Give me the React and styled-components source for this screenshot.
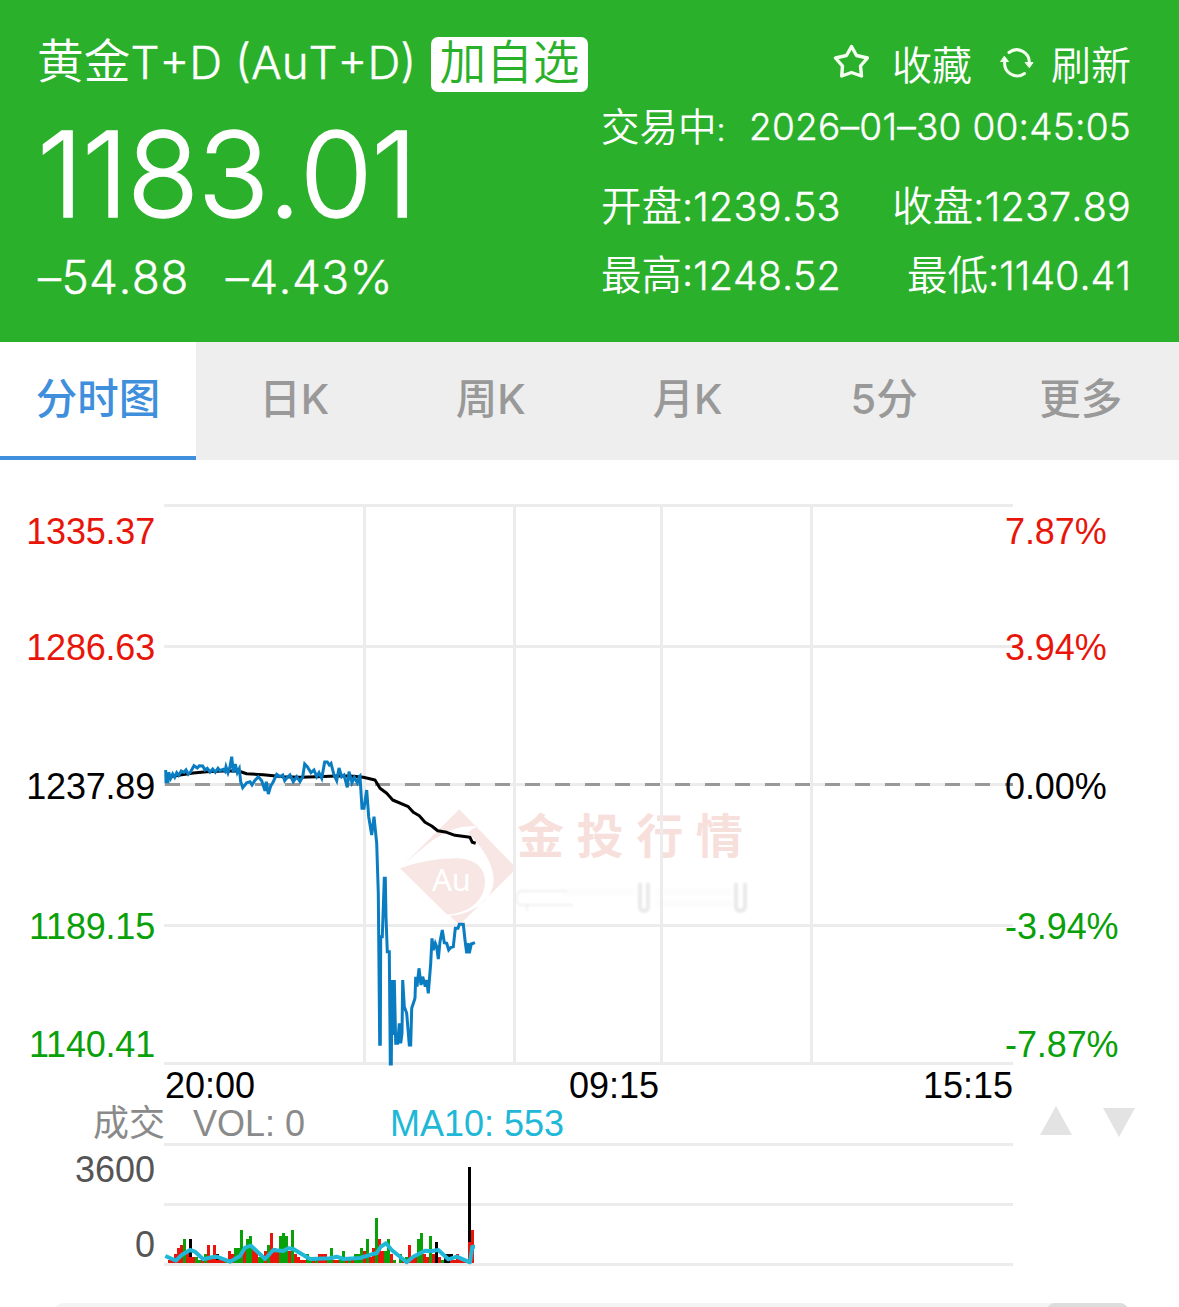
import React from 'react'
import styled, { createGlobalStyle } from 'styled-components';

const GlobalStyle = createGlobalStyle`
   * {
      box-sizing: border-box;
   }
   body {
      margin: 0;
      background: #fff;
      font-family: Inter, "Noto Sans CJK SC", sans-serif;
   }
`;
const Page = styled.div`
   width: 1179px;
   height: 1307px;
   overflow: hidden;
   background: #fff;
`;

/* header */
const Header = styled.header`
   display: flex;
   justify-content: space-between;
   height: 342px;
   padding: 37px 48px 0 37px;
   background: #2bb02b;
   color: #fff;
   font-weight: 350;
   font-kerning: none;
   white-space: nowrap;
`;
const Summary = styled.div`
   display: flex;
   flex-direction: column;
`;
const TitleRow = styled.div`
   display: flex;
   height: 55px;
   font-size: 46.7px;
   line-height: 48px;
`;
const Latin = styled.span`
   font-size: ${p => p.$size}px;
   letter-spacing: ${p => p.$space || 0}px;
   vertical-align: ${p => p.$drop || 0}px;
   -webkit-text-stroke: 0.4px #fff;
`;
const AddButton = styled.button`
   width: 157px;
   height: 55px;
   padding: 0 0 5px;
   border: 0;
   border-radius: 7px;
   background: #fff;
   color: #2bb02b;
   font: inherit;
   line-height: 48px;
`;
const TitleText = styled.div`
   width: 394px;
`;
const Price = styled.div`
   height: 165px;
   font-size: 118px;
   font-weight: 300;
   line-height: 165px;
   letter-spacing: -1.4px;
   -webkit-text-stroke: 1.4px #fff;
`;
const Change = styled.div`
   display: flex;
   gap: 37px;
   padding-left: 1px;
   font-size: 46px;
   line-height: 41px;
   letter-spacing: 0.4px;
   -webkit-text-stroke: 0.4px #fff;
`;
const Details = styled.div`
   display: flex;
   flex-direction: column;
   width: 530px;
`;
const Actions = styled.div`
   display: flex;
   justify-content: flex-end;
   align-items: center;
   height: 51px;
   margin-bottom: 4px;
   font-size: 40px;
`;
const Action = styled.div`
   display: flex;
   align-items: center;
   gap: ${p => p.$gap}px;
   margin-left: 27px;
   svg {
      display: block;
      margin-bottom: 2px;
   }
`;
const DetailRow = styled.div`
   display: flex;
   justify-content: space-between;
   height: ${p => p.$height}px;
   font-size: ${p => p.$size}px;
   line-height: ${p => p.$height}px;
`;

/* tabs */
const Tabs = styled.nav`
   display: grid;
   grid-template-columns: 196px repeat(5, 1fr);
   height: 118px;
   background: #eee;
`;
const Tab = styled.a`
   border-bottom: 4px solid ${p => (p.$active ? '#3f8fdc' : 'transparent')};
   background: ${p => (p.$active ? '#fff' : 'transparent')};
   color: ${p => (p.$active ? '#3f8fdc' : '#999')};
   font-size: 41.5px;
   font-weight: 500;
   line-height: 114px;
   text-align: center;
`;

/* charts */
const Charts = styled.main`
   padding-top: 44px;
   font-family: "Liberation Sans", "Noto Sans CJK SC", sans-serif;
   font-size: 36px;
   line-height: 36px;
`;
const PriceChart = styled.section`
   display: grid;
   grid-template-columns: 164px 841px 174px;
   height: 562px;
`;
const Scale = styled.div`
   display: grid;
   grid-template-rows: 116px 139px 140px 118px 36px;
   padding-top: 10px;
   padding-right: ${p => (p.$right ? 0 : 9)}px;
   letter-spacing: ${p => (p.$right ? -0.1 : -0.2)}px;
   text-align: ${p => (p.$right ? 'left' : 'right')};
   z-index: 1;
`;
const ScaleLabel = styled.span`
   color: ${p => p.$color};
`;
const Plot = styled.svg`
   display: block;
   overflow: visible;
`;
const Times = styled.div`
   display: grid;
   grid-template-columns: 404px 1fr auto;
   width: 848px;
   height: 38px;
   margin-left: 165px;
   padding-top: 2px;
`;
const VolumeInfo = styled.div`
   display: flex;
   align-items: center;
   height: 39px;
   padding: 0 44px 0 93px;
   color: #8a8a8a;
   white-space: nowrap;
`;
const Info = styled.span`
   width: ${p => p.$width}px;
   color: ${p => p.$color};
`;
const Arrows = styled.svg`
   margin: 0 0 5px auto;
`;
const VolumeChart = styled.section`
   display: grid;
   grid-template-columns: 164px 849px;
   height: 160px;
`;
const VolumeScale = styled.div`
   display: flex;
   flex-direction: column;
   gap: 39px;
   padding: 9px 9px 0 0;
   color: #555;
   text-align: right;
`;
const SearchBar = styled.div`
   display: flex;
   justify-content: flex-end;
   width: 1073px;
   height: 40px;
   margin-left: 55px;
   border-radius: 8px;
   background: #f4f4f4;
   overflow: hidden;
`;
const SearchButton = styled.div`
   width: 81px;
   border-radius: 8px 0 0 0;
   background: #ddd;
`;

const RED = '#e8160a';
const GREEN = '#09a009';

const scale = [
   { price: '1335.37', percent: '7.87%', color: RED },
   { price: '1286.63', percent: '3.94%', color: RED },
   { price: '1237.89', percent: '0.00%', color: '#000' },
   { price: '1189.15', percent: '-3.94%', color: GREEN },
   { price: '1140.41', percent: '-7.87%', color: GREEN },
];

const tabs = ['分时图', '日K', '周K', '月K', '5分', '更多'];

// one third of a pixel per unit, measured from the left end of each session
const early = [
   [47, 90], [48, 125], [54, 125], [56, 97], [62, 115], [68, 102], [74, 112], [80, 98], [86, 106], [94, 93],
   [102, 97], [108, 90], [115, 103], [122, 95], [132, 77], [142, 84], [148, 77], [158, 78], [165, 90], [172, 85],
   [180, 96], [188, 87], [196, 97], [204, 85], [210, 92], [220, 88], [225, 94], [228, 80], [234, 98], [240, 80],
   [245, 50], [250, 98], [256, 72], [262, 98], [268, 86], [272, 125], [278, 143], [290, 128], [300, 125], [306, 135],
   [314, 122], [325, 110], [335, 122], [345, 152], [349, 125], [355, 162], [362, 138], [370, 125], [380, 103], [390, 110],
   [398, 105], [404, 122], [412, 112], [420, 105], [430, 125], [440, 110], [450, 125], [458, 110], [464, 72], [472, 80],
   [483, 98], [492, 90], [500, 110], [507, 98], [515, 115], [524, 66], [532, 66], [538, 75], [543, 70], [552, 105],
   [560, 122], [567, 84], [575, 110], [582, 105], [592, 142], [597, 95], [606, 128], [613, 112], [622, 128], [628, 110],
];
const late = [
   [30, 48], [36, 145], [42, 145], [50, 90], [56, 170], [65, 225], [72, 170], [80, 250], [85, 400], [89, 853],
   [91, 853], [92, 530], [97, 530], [103, 355], [106, 355], [108, 470], [112, 575], [118, 575], [121, 912], [124, 912],
   [126, 660], [130, 825], [133, 660], [137, 850], [143, 850], [148, 790], [152, 850], [156, 820], [158, 660],
   [163, 740], [170, 760], [178, 855], [182, 855], [185, 745], [195, 715], [197, 650], [201, 680], [207, 625], [213, 675],
   [218, 650], [226, 680], [230, 660], [235, 700], [242, 610], [246, 535], [250, 570], [256, 550], [260, 560],
   [265, 597], [270, 545], [277, 510], [283, 548], [290, 550], [296, 570], [303, 562], [310, 560], [316, 505],
   [324, 505], [328, 493], [340, 493], [345, 540], [350, 580], [354, 550], [358, 580], [364, 552], [375, 548],
];
const averageEarly = [
   [50, 114], [60, 110], [90, 105], [130, 99], [170, 95], [220, 93], [265, 93], [290, 101], [340, 104], [400, 110],
   [450, 112], [500, 110], [560, 108], [600, 108],
];
const averageLate = [
   [0, 48], [40, 52], [75, 60], [90, 85], [110, 100], [128, 120], [175, 140], [190, 157], [208, 167], [225, 187],
   [245, 198], [263, 212], [290, 217], [315, 226], [360, 232], [367, 247], [377, 250],
];
const volumeEarly = [
   [46, 318], [78, 332], [95, 315], [120, 300], [135, 305], [160, 328], [185, 322], [200, 320], [240, 335],
   [270, 318], [285, 293], [303, 287], [345, 327], [370, 300], [400, 303], [415, 295], [430, 297], [480, 327],
];
const volumeLate = [
   [0, 327], [60, 325], [80, 320], [100, 327], [150, 324], [185, 313], [200, 310], [212, 290], [228, 280], [245, 300],
   [290, 337], [310, 320], [345, 302], [365, 303], [385, 300], [415, 328], [440, 320], [480, 337], [487, 290], [495, 290],
];

const bars = (
   'r1 r1 r3 r5 r6 g8 r4 k8:2 r2 g2 g1 r1 g3 r6 r2 r6 k3:1 r2 r1 g1 r4 r3 g5 g5 g11 r5 g8 g9 r5 r4 g2 g2 r4 g6 r10 r5 r4 ' +
   'g9 g10 g9 r4 g11 r3 r2 r1 r1 g3 g2 r2 g2 r3 r3 r3 g1 g5 r1 r1 g2 g4 r2 g2 r1 g3 g3 g5 r4 g8 r2 r5 g15 r8 r4 g4 g8 r3 ' +
   'g1 r0 g3 r1 g2 r6 r2 r2 g8 g10 r3 r2 g9 r3 k7 r2 g1 k3 k3 k3:1 r1 r3 r1 r1 r1 k32:7 r11'
).split(' ').map((bar) => {
   const [height, base = 0] = bar.slice(1).split(':').map(Number);
   return { color: bar[0], height, base };
});
const barColors = { r: RED, g: GREEN, k: '#000' };

const shift = (points, left, top) => points.map(([x, y]) => `${(left + x / 3).toFixed(1)},${(top + y / 3).toFixed(1)}`).join(' ');

const StarIcon = () => (
   <svg width="37" height="36" viewBox="0 0 37 36" fill="none" stroke="#f4fff0" strokeWidth="3.4" strokeLinejoin="round">
      <path d="M19.500 2.500l5 9 11 2.500-7 8 1 10-10-3.500-9.800 3.500.8-10L3.500 14l11-2.500z" />
   </svg>
);

const RefreshIcon = () => (
   <svg width="36" height="32" viewBox="0 0 36 32" fill="none" stroke="#f4fff0" strokeWidth="3" strokeLinecap="round">
      <path d="M10 6.500a12.500 12.500 0 0 1 20.200 11M25.500 27.500a12.500 12.500 0 0 1-19.700-12" />
      <path d="M26.500 16.500h7.500l-3.500 5zM2 15.500h7.500l-4-5z" fill="#f4fff0" strokeWidth="1" />
   </svg>
);

const Watermark = () => (
   <g>
      <g transform="translate(390 800) scale(.3333)" fill="#f7e6e4">
         <path d="M208 28L380 205 208 375 180 348C260 340 314 290 311 235C308 180 265 130 235 98Q243 86 264 80C180 68 110 130 33 202z" />
         <path d="M30 205Q110 176 195 175C255 174 285 205 285 245C284 300 240 338 172 344z" />
      </g>
      <text x="432" y="891" fill="#fff" fontFamily="Noto Sans, sans-serif" fontSize="31">Au</text>
      <text x="517" y="853" fill="#f7e0dc" fontFamily="Noto Sans CJK SC, sans-serif" fontSize="47" fontWeight="700" letterSpacing="12.6">金投行情</text>
      <g fill="none" stroke="#e9e9e9" strokeWidth="2" filter="url(#soften)">
         <path d="M567 891H523q-7 0-7 7t7 7h4v6M523 905h50" opacity=".7" />
         <path d="M640 883v22q0 6 4 6t4-6v-22M736 883v22q0 6 4.500 6t4.500-6v-22" strokeWidth="4" />
         <path d="M565 892h70M655 892h78M655 903h78" strokeWidth="8" opacity=".12" />
      </g>
   </g>
);

const PricePlot = () => (
   <Plot width="849" height="562" viewBox="164 504 849 562" fill="none">
      <defs>
         <filter id="soften">
            <feGaussianBlur stdDeviation="1.3" />
         </filter>
      </defs>
      <Watermark />
      <g stroke="#ececec" strokeWidth="3">
         {[505.5, 646.5, 784.5, 925.5, 1063.5].map((y) => <path key={y} d={`M164 ${y}H1013`} />)}
         {[364.5, 514.5, 661.5, 811.5].map((x) => <path key={x} d={`M${x} 505V1064`} />)}
      </g>
      <path d="M165 784.5H1013" stroke="#999" strokeWidth="3" strokeDasharray="15 15" />
      <polyline points={`${shift(averageEarly, 150, 740)} ${shift(averageLate, 350, 760)}`} stroke="#000" strokeWidth="3" strokeLinejoin="round" />
      <polyline points={`${shift(early, 150, 740)} ${shift(late, 350, 760)}`} stroke="#0a7cc1" strokeWidth="3" />
   </Plot>
);

const VolumePlot = () => (
   <Plot width="849" height="124" viewBox="164 1143 849 124" fill="none">
      <g stroke="#ececec" strokeWidth="3">
         <path d="M164 1144.500H1013M164 1204.500H1013M164 1264.500H1013" />
      </g>
      {bars.map(({ color, height, base }, i) => (
         <g key={i}>
            <rect x={168 + i * 3} y={1263 - height * 3} width="3" height={height * 3} fill={barColors[color]} />
            <rect x={168 + i * 3} y={1263 - base * 3} width="3" height={base * 3} fill={RED} />
         </g>
      ))}
      <polyline points={`${shift(volumeEarly, 150, 1150)} ${shift(volumeLate, 310, 1150)}`} stroke="#20b8d6" strokeWidth="4" strokeLinejoin="round" />
   </Plot>
);

const App = () => {
   return (
      <Page>
         <GlobalStyle />
         <Header>
            <Summary>
               <TitleRow>
                  <TitleText>黄金<Latin $size={45.7} $drop={-1}>T+D (AuT+D)</Latin></TitleText>
                  <AddButton>加自选</AddButton>
               </TitleRow>
               <Price>1183.01</Price>
               <Change>
                  <span>–54.88</span>
                  <span>–4.43%</span>
               </Change>
            </Summary>
            <Details>
               <Actions>
                  <Action $gap={23}><StarIcon /><span>收藏</span></Action>
                  <Action $gap={16}><RefreshIcon /><span>刷新</span></Action>
               </Actions>
               <DetailRow $height={70} $size={38.5}>
                  <span>交易中<Latin $size={32}>:</Latin></span>
                  <Latin $size={37} $space={0.25}>2026–01–30 00:45:05</Latin>
               </DetailRow>
               <DetailRow $height={90} $size={40.5}>
                  <span>开盘<Latin $size={39.5} $space={0.2}>:1239.53</Latin></span>
                  <span>收盘<Latin $size={39.5} $space={0.2}>:1237.89</Latin></span>
               </DetailRow>
               <DetailRow $height={48} $size={40.5}>
                  <span>最高<Latin $size={39.5}>:1248.52</Latin></span>
                  <span>最低<Latin $size={39.5}>:1140.41</Latin></span>
               </DetailRow>
            </Details>
         </Header>
         <Tabs>
            {tabs.map((tab, i) => <Tab key={tab} $active={i === 0}>{tab}</Tab>)}
         </Tabs>
         <Charts>
            <PriceChart>
               <Scale>
                  {scale.map((row) => <ScaleLabel key={row.price} $color={row.color}>{row.price}</ScaleLabel>)}
               </Scale>
               <PricePlot />
               <Scale $right>
                  {scale.map((row) => <ScaleLabel key={row.percent} $color={row.color}>{row.percent}</ScaleLabel>)}
               </Scale>
            </PriceChart>
            <Times>
               <span>20:00</span>
               <span>09:15</span>
               <span>15:15</span>
            </Times>
            <VolumeInfo>
               <Info $width={100}>成交</Info>
               <Info $width={197}>VOL: 0</Info>
               <Info $color="#20b8d6">MA10: 553</Info>
               <Arrows width="95" height="32" viewBox="0 0 95 32" fill="#e3e3e3">
                  <path d="M0 30L16 1 32 30zM63 3H95L79 32z" />
               </Arrows>
            </VolumeInfo>
            <VolumeChart>
               <VolumeScale>
                  <span>3600</span>
                  <span>0</span>
               </VolumeScale>
               <VolumePlot />
            </VolumeChart>
            <SearchBar>
               <SearchButton />
            </SearchBar>
         </Charts>
      </Page>
   )
}

export default App;
